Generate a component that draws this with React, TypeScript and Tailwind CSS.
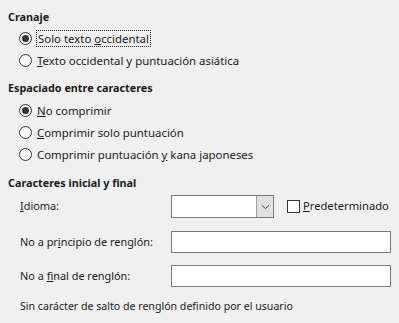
import React from 'react';

const font = { fontFamily: '"Noto Sans", "Open Sans", sans-serif' };

function Radio({ checked }: { checked?: boolean }) {
  return (
    <span className="w-[13px] h-[13px] rounded-full border border-[#333] bg-white flex items-center justify-center shrink-0">
      {checked && <span className="w-[7px] h-[7px] rounded-full bg-[#333]" />}
    </span>
  );
}

function RadioRow({ checked, focus, children }: { checked?: boolean; focus?: boolean; children: React.ReactNode }) {
  return (
    <div className="h-[22px] flex items-center pl-[19px] gap-[5px]">
      <Radio checked={checked} />
      <span className={focus ? 'outline outline-1 outline-dotted outline-[#222] px-[1px] leading-[15px]' : 'leading-[15px]'}>
        {children}
      </span>
    </div>
  );
}

export default function App() {
  return (
    <div className="w-[399px] h-[323px] bg-[#f0f0f0] text-[#1a1a1a] text-[11.4px] pt-[9px] overflow-hidden" style={font}>
      {/* Cranaje */}
      <div className="h-4 flex items-center pl-2 font-bold text-[10.8px]">Cranaje</div>
      <div className="mt-[2px]">
        <RadioRow checked focus>
          Solo texto <u>o</u>ccidental
        </RadioRow>
        <RadioRow>
          <u>T</u>exto occidental y puntuación asiática
        </RadioRow>
      </div>

      {/* Espaciado */}
      <div className="h-4 flex items-center pl-2 font-bold text-[10.8px] mt-[9px]">Espaciado entre caracteres</div>
      <div className="mt-[3px]">
        <RadioRow checked>
          <u>N</u>o comprimir
        </RadioRow>
        <RadioRow>
          <u>C</u>omprimir solo puntuación
        </RadioRow>
        <RadioRow>
          Comprimir puntuación <u>y</u> kana japoneses
        </RadioRow>
      </div>

      {/* Caracteres inicial y final */}
      <div className="h-4 flex items-center pl-2 font-bold text-[10.8px] mt-[10px]">Caracteres inicial y final</div>

      <div className="mt-[4px] h-[23px] flex items-center">
        <span className="w-[171px] pl-5 shrink-0 text-[10.9px]">
          <u>I</u>dioma:
        </span>
        <div className="w-[103px] h-[23px] border border-[#7a7a7a] bg-white flex justify-end">
          <div className="w-[17px] h-full bg-[#e1e1e1] border-l border-[#a0a0a0] flex items-center justify-center">
            <svg width="9" height="6" viewBox="0 0 9 6">
              <path d="M1 1.5 L4.5 4.5 L8 1.5" fill="none" stroke="#444" strokeWidth="1" />
            </svg>
          </div>
        </div>
        <span className="ml-[13px] w-[13px] h-[13px] border border-[#333] bg-white shrink-0" />
        <span className="ml-[3px] text-[11.2px]">
          <u>P</u>redeterminado
        </span>
      </div>

      <div className="mt-[13px] h-[22px] flex items-center">
        <span className="w-[171px] pl-5 shrink-0 text-[10.9px]">
          No a pr<u>i</u>ncipio de renglón:
        </span>
        <div className="w-[220px] h-[22px] border border-[#7a7a7a] bg-white" />
      </div>

      <div className="mt-[12px] h-[22px] flex items-center">
        <span className="w-[171px] pl-5 shrink-0 text-[10.9px]">
          No a <u>f</u>inal de renglón:
        </span>
        <div className="w-[220px] h-[22px] border border-[#7a7a7a] bg-white" />
      </div>

      <div className="mt-[12px] h-4 flex items-center pl-5 text-[10.6px]">
        Sin carácter de salto de renglón definido por el usuario
      </div>
    </div>
  );
}
